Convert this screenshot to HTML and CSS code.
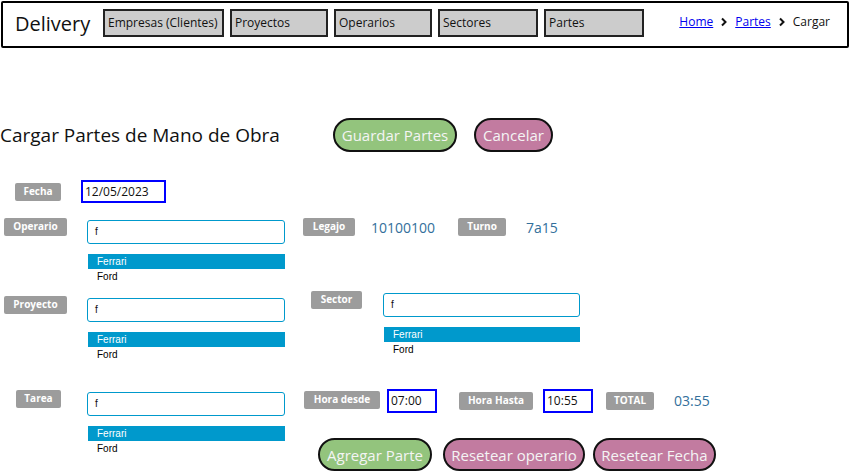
FILE: index.html
```html
<!DOCTYPE html>
<html lang="es">
<head>
<meta charset="utf-8">
<title>Cargar Partes</title>
<link rel="stylesheet" href="styles.css">
</head>
<body>
<header class="header">
  <div class="brand">Delivery</div>
  <nav class="nav">
    <span class="tab tab-emp">Empresas (Clientes)</span>
    <span class="tab tab-pro">Proyectos</span>
    <span class="tab tab-ope">Operarios</span>
    <span class="tab tab-sec">Sectores</span>
    <span class="tab tab-par">Partes</span>
  </nav>
  <div class="crumbs">
    <a href="#">Home</a>
    <svg class="chev" width="8" height="10" viewBox="0 0 8 10"><path d="M2 1.5 L5.5 5 L2 8.5" fill="none" stroke="#111" stroke-width="2"/></svg>
    <a href="#">Partes</a>
    <svg class="chev" width="8" height="10" viewBox="0 0 8 10"><path d="M2 1.5 L5.5 5 L2 8.5" fill="none" stroke="#111" stroke-width="2"/></svg>
    <span>Cargar</span>
  </div>
</header>

<main class="page">
  <div class="row row-title">
    <h1 class="title">Cargar Partes de Mano de Obra</h1>
    <button class="btn btn-green btn-guardar">Guardar Partes</button>
    <button class="btn btn-pink btn-cancelar">Cancelar</button>
  </div>

  <div class="row row-fecha">
    <span class="lbl lbl-fecha">Fecha</span>
    <span class="box box-fecha">12/05/2023</span>
  </div>

  <div class="row row-operario">
    <span class="lbl lbl-operario">Operario</span>
    <div class="combo combo-operario">
      <div class="combo-input">f</div>
      <div class="opt sel">Ferrari</div>
      <div class="opt">Ford</div>
    </div>
    <span class="lbl lbl-legajo">Legajo</span>
    <span class="val val-legajo">10100100</span>
    <span class="lbl lbl-turno">Turno</span>
    <span class="val val-turno">7a15</span>
  </div>

  <div class="row row-proyecto">
    <span class="lbl lbl-proyecto">Proyecto</span>
    <div class="combo combo-proyecto">
      <div class="combo-input">f</div>
      <div class="opt sel">Ferrari</div>
      <div class="opt">Ford</div>
    </div>
    <span class="lbl lbl-sector">Sector</span>
    <div class="combo combo-sector">
      <div class="combo-input">f</div>
      <div class="opt sel">Ferrari</div>
      <div class="opt">Ford</div>
    </div>
  </div>

  <div class="row row-tarea">
    <span class="lbl lbl-tarea">Tarea</span>
    <div class="combo combo-tarea">
      <div class="combo-input">f</div>
      <div class="opt sel">Ferrari</div>
      <div class="opt">Ford</div>
    </div>
    <div class="right-col">
      <div class="hora-row">
        <span class="lbl lbl-desde">Hora desde</span>
        <span class="box box-hora box-desde">07:00</span>
        <span class="lbl lbl-hasta">Hora Hasta</span>
        <span class="box box-hora box-hasta">10:55</span>
        <span class="lbl lbl-total">TOTAL</span>
        <span class="val val-total">03:55</span>
      </div>
      <div class="btn-row">
        <button class="btn btn-green btn-agregar">Agregar Parte</button>
        <button class="btn btn-pink btn-reset-op">Resetear operario</button>
        <button class="btn btn-pink btn-reset-fe">Resetear Fecha</button>
      </div>
    </div>
  </div>
</main>
</body>
</html>
```

FILE: styles.css
```css
* { box-sizing: border-box; }
html, body { margin: 0; padding: 0; background: #fff; }
body {
  font-family: "Open Sans", "Noto Sans", sans-serif;
  color: #111;
  width: 857px;
  height: 472px;
  overflow: hidden;
}

/* Header */
.header {
  margin: 1px 0 0 1px;
  width: 848px;
  height: 47px;
  border: 2px solid #000;
  border-radius: 2px;
  display: flex;
  align-items: flex-start;
}
.brand {
  flex: 0 0 auto;
  width: 88px;
  margin: 8px 0 0 12px;
  font-size: 20px;
  line-height: 26px;
  color: #111;
}
.nav {
  display: flex;
  gap: 6px;
  margin-top: 6px;
  margin-left: 0;
}
.tab {
  display: block;
  height: 28px;
  background: #cccccc;
  border: 2px solid #222;
  font-size: 12px;
  line-height: 24px;
  padding-left: 3px;
  color: #111;
  white-space: nowrap;
  overflow: hidden;
}
.tab-emp { width: 121px; }
.tab-pro { width: 98px; }
.tab-ope { width: 98px; }
.tab-sec { width: 100px; }
.tab-par { width: 100px; }

.crumbs {
  margin-left: auto;
  margin-right: 17px;
  margin-top: 10px;
  display: flex;
  align-items: center;
  gap: 7px;
  font-size: 12px;
  line-height: 18px;
  color: #111;
}
.crumbs a { color: #0000ee; text-decoration: underline; }
.chev { display: block; }

/* Page */
.page { display: flex; flex-direction: column; }
.row { display: flex; }

.row-title { margin-top: 70px; align-items: center; height: 34px; }
.title {
  margin: 0;
  flex: 0 0 333px;
  font-weight: normal;
  font-size: 19px;
  line-height: 24px;
  color: #111;
}
.btn {
  font-family: "Open Sans", "Noto Sans", sans-serif;
  font-size: 15px;
  color: #f4f4f4;
  border: 2px solid #111;
  border-radius: 18px;
  padding: 0;
  text-align: center;
  white-space: nowrap;
}
.btn-green { background: #93c47d; }
.btn-pink { background: #c27ba0; }
.btn-guardar { width: 124px; height: 34px; }
.btn-cancelar { width: 79px; height: 34px; margin-left: 17px; }

.lbl {
  display: block;
  flex: 0 0 auto;
  height: 18px;
  background: #9c9c9c;
  border-radius: 2px;
  color: #fff;
  font-weight: bold;
  font-size: 10px;
  line-height: 16px;
  text-align: center;
  white-space: nowrap;
}
.box {
  display: block;
  border: 2px solid #0000ff;
  font-size: 12px;
  color: #111;
  padding-left: 2px;
  white-space: nowrap;
}

.row-fecha { margin-top: 28px; align-items: center; height: 23px; }
.lbl-fecha { width: 46px; margin-left: 15px; }
.box-fecha { width: 85px; height: 23px; margin-left: 20px; line-height: 19px; }

.row-operario { margin-top: 15px; align-items: flex-start; }
.lbl-operario { width: 63px; margin-left: 4px; }
.combo { flex: 0 0 auto; }
.combo-operario { width: 198px; margin-left: 20px; margin-top: 2px; }
.combo-input {
  height: 24px;
  border: 1px solid #0099cc;
  border-radius: 3px;
  font-family: "Liberation Sans", Arial, sans-serif;
  font-size: 10px;
  line-height: 22px;
  padding-left: 7px;
  color: #111;
  margin-bottom: 10px;
}
.opt {
  height: 15px;
  margin-left: 1px;
  font-family: "Liberation Sans", Arial, sans-serif;
  font-size: 10px;
  line-height: 15px;
  padding-left: 9px;
  color: #000;
}
.opt.sel { background: #0099cc; color: #fff; }

.val {
  display: block;
  font-size: 14px;
  line-height: 20px;
  color: #336f9b;
}
.lbl-legajo { width: 52px; margin-left: 18px; }
.val-legajo { width: 87px; margin-left: 16px; }
.lbl-turno { width: 48px; }
.val-turno { margin-left: 20px; }

.row-proyecto { margin-top: 7px; align-items: flex-start; }
.lbl-proyecto { width: 63px; margin-left: 4px; margin-top: 5px; }
.combo-proyecto { width: 198px; margin-left: 20px; margin-top: 7px; }
.lbl-sector { width: 51px; margin-left: 26px; }
.combo-sector { width: 197px; margin-left: 21px; margin-top: 2px; }

.row-tarea { margin-top: 27px; align-items: flex-start; }
.lbl-tarea { width: 45px; margin-left: 16px; margin-top: 1px; }
.combo-tarea { width: 198px; margin-left: 26px; margin-top: 3px; }
.right-col { margin-left: 19px; display: flex; flex-direction: column; }
.hora-row { display: flex; align-items: center; height: 24px; }
.lbl-desde { width: 76px; margin-top: -2px; }
.box-hora { width: 50px; height: 24px; line-height: 20px; }
.box-desde { margin-left: 7px; }
.lbl-hasta { width: 74px; margin-left: 22px; }
.box-hasta { margin-left: 10px; }
.lbl-total { width: 48px; margin-left: 13px; }
.val-total { margin-left: 20px; }

.btn-row { display: flex; margin-top: 25px; margin-left: 14px; }
.btn-agregar { width: 114px; height: 33px; }
.btn-reset-op { width: 142px; height: 33px; margin-left: 11px; }
.btn-reset-fe { width: 123px; height: 33px; margin-left: 8px; }
```
